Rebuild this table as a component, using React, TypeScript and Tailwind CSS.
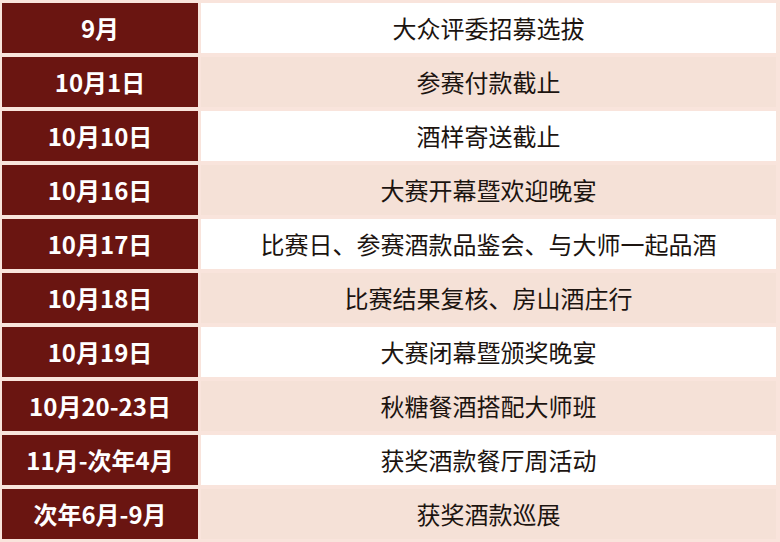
const rows = [
  ["9月", "大众评委招募选拔"],
  ["10月1日", "参赛付款截止"],
  ["10月10日", "酒样寄送截止"],
  ["10月16日", "大赛开幕暨欢迎晚宴"],
  ["10月17日", "比赛日、参赛酒款品鉴会、与大师一起品酒"],
  ["10月18日", "比赛结果复核、房山酒庄行"],
  ["10月19日", "大赛闭幕暨颁奖晚宴"],
  ["10月20-23日", "秋糖餐酒搭配大师班"],
  ["11月-次年4月", "获奖酒款餐厅周活动"],
  ["次年6月-9月", "获奖酒款巡展"],
];

export default function App() {
  return (
    <div
      className="w-[780px] h-[542px] bg-[#f9e4dc] pt-[3px] pl-[2px] pr-[4px] pb-[3px]"
      style={{ fontFamily: '"Noto Sans CJK SC", "Noto Sans", sans-serif' }}
    >
      <div className="grid grid-cols-[196px_1fr] gap-x-[3px] gap-y-[4px]">
        {rows.map(([date, event], idx) => (
          <div key={idx} className="contents">
            <div className="h-[50px] bg-[#6a1511] text-white font-bold text-[24px] flex items-center justify-center leading-none">
              {date}
            </div>
            <div
              className={
                "h-[50px] flex items-center justify-center text-[24px] text-[#1c1410] leading-none " +
                (idx % 2 === 0 ? "bg-white" : "bg-[#f5e1d7]")
              }
            >
              {event}
            </div>
          </div>
        ))}
      </div>
    </div>
  );
}
